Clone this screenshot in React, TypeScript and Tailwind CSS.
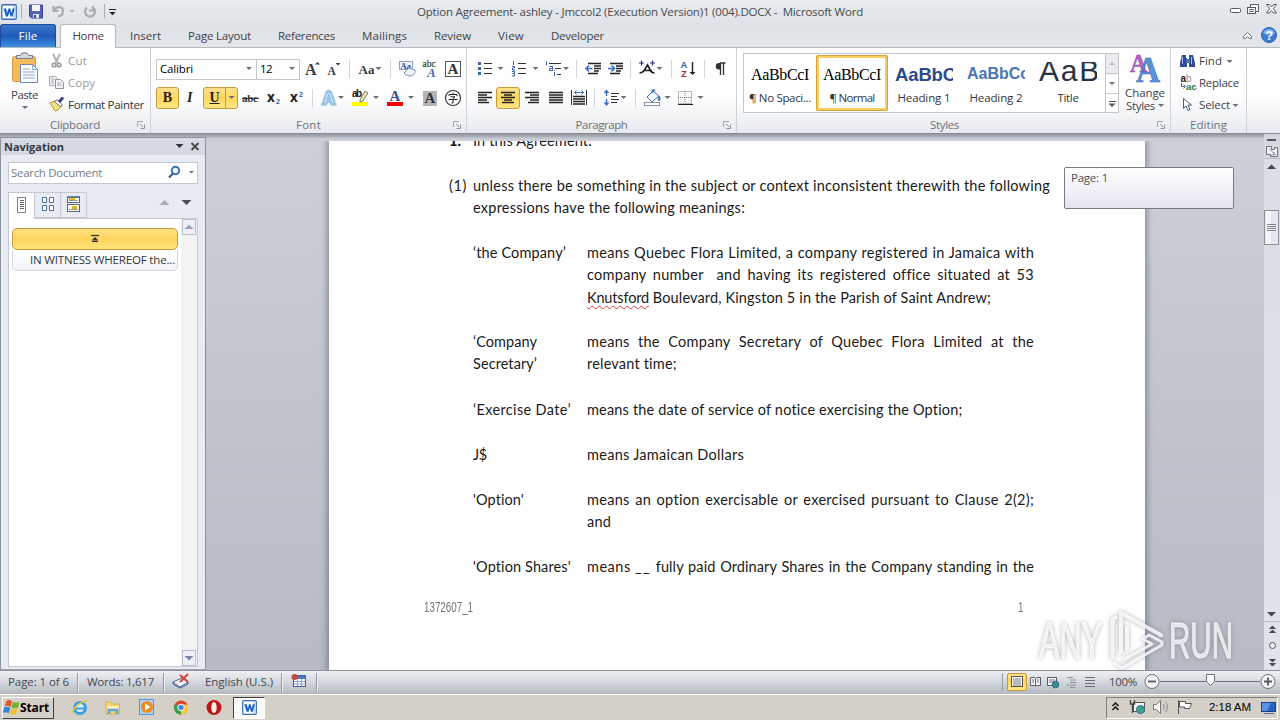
import React, { useLayoutEffect, useRef } from "react";

type FitProps = { w: number; c?: string; word?: boolean; children: string };

/* A single line of text whose tracking (or word gap) is adjusted to a given width. */
function Fit({ w, c = "", word = false, children }: FitProps) {
  const ref = useRef<HTMLSpanElement>(null);
  useLayoutEffect(() => {
    const el = ref.current;
    if (!el) return;
    el.style.letterSpacing = "";
    el.style.wordSpacing = "";
    const natural = el.getBoundingClientRect().width;
    if (word) {
      const gaps = children.split(" ").length - 1;
      el.style.wordSpacing = `${(w - natural) / gaps}px`;
    } else {
      el.style.letterSpacing = `${(w - natural) / children.length}px`;
    }
  }, [w, word, children]);
  return (
    <span ref={ref} className={`inline-block shrink-0 whitespace-pre ${c}`}>
      {children}
    </span>
  );
}

type IcoProps = { x: number; y: number; w: number; h: number; children?: React.ReactNode };

/* Icon canvas: its view box starts at (x, y). */
function Ico({ x, y, w, h, children }: IcoProps) {
  return (
    <svg className="block shrink-0" width={w} height={h} viewBox={`${x} ${y} ${w} ${h}`} fill="none">
      {children}
    </svg>
  );
}

const Down = ({ x, y, s = 3, f = "#6b6f76" }: { x: number; y: number; s?: number; f?: string }) => (
  <path d={`M${x - s} ${y}h${2 * s}l${-s} ${s}z`} fill={f} />
);
const Up = ({ x, y, s = 3, f = "#6b6f76" }: { x: number; y: number; s?: number; f?: string }) => (
  <path d={`M${x - s} ${y + s}h${2 * s}l${-s} ${-s}z`} fill={f} />
);
const VSep = ({ x, y }: { x: number; y: number }) => <path d={`M${x + 0.5} ${y}v18`} stroke="#d3d6db" />;

function Launcher() {
  return (
    <svg className="block h-2 w-2 shrink-0" viewBox="0 0 8 8" fill="none">
      <path d="M.5 6V.5H6" stroke="#a2a6ad" />
      <path d="M3 3l3 3M7.500 3.500v4h-4" stroke="#8f949c" />
    </svg>
  );
}

function WordLogo({ s = 16 }: { s?: number }) {
  return (
    <svg className="block shrink-0" width={s} height={s} viewBox="0 0 16 16" fill="none">
      <rect x=".75" y=".75" width="14.500" height="14.500" rx="1" fill="#f4f9ff" stroke="#3a6fb8" strokeWidth="1.300" />
      <path d="M12 2h2.500v12H12z" fill="#c9dcf3" />
      <path d="M2.500 4.500h2.600l1.100 4.600 1.300-4.600h1.700l1.200 4.600 1.200-4.600h2.200l-2.300 8H9.600L8.300 8.200 7 12.500H4.900z" fill="#1f62c4" />
    </svg>
  );
}

function TitleBar() {
  return (
    <div className="flex h-6 shrink-0 items-center bg-linear-to-b from-[#e9ebee] to-[#dfe3e7]">
      <div className="ml-px"><WordLogo /></div>
      <Ico x={17} y={0} w={105} h={24}>
        <path d="M21.500 4v14M104.500 4v14" stroke="#a9adb3" />
        <path d="M29.500 5h13v13h-11l-2-2z" fill="#5560b8" stroke="#3b4390" />
        <path d="M32 5h8v6h-8z" fill="#f3f6fc" />
        <path d="M33 14h6v4h-6z" fill="#dfe4f2" />
        <path d="M34 15h2v3h-2z" fill="#3b4390" />
        <path d="M53.500 6v5h5M54 10.500c3-5 9-4 9 .5 0 3-2 5-5 5.500" stroke="#a9adb2" strokeWidth="2.200" />
        <Down x={72} y={10} f="#a6aab0" s={2.5} />
        <path d="M93 6v4.500h-4M87 7.500a5 5 0 1 0 7 1" stroke="#a9adb2" strokeWidth="2.200" />
        <path d="M109 9.500h7" stroke="#222" />
        <Down x={112.5} y={12} f="#222" s={3.2} />
      </Ico>
      <Fit w={446} c="ml-[295px] font-['Open_Sans',sans-serif] text-[11.500px] leading-[24px] text-[#45484d]">
        Option Agreement- ashley - Jmccol2 (Execution Version)1 (004).DOCX -  Microsoft Word
      </Fit>
      <div className="flex-1" />
      <Ico x={1226} y={0} w={54} h={24}>
        <rect x="1230.500" y="8.500" width="10" height="4" rx="1" fill="#fff" stroke="#555a62" />
        <path d="M1250.500 7.500v-3h8v7h-3" fill="#fff" stroke="#555a62" />
        <rect x="1247.500" y="7.500" width="8" height="6" fill="#fff" stroke="#555a62" />
        <rect x="1250" y="9.500" width="3" height="2" fill="#fff" stroke="#555a62" />
        <path d="M1266.500 4.500h3l2 2.500 2-2.500h3l-3.300 4.200 3.300 4.300h-3l-2-2.500-2 2.500h-3l3.300-4.300z" fill="#fff" stroke="#555a62" />
      </Ico>
    </div>
  );
}

function Tabs() {
  const t = "font-['Open_Sans',sans-serif] text-[11.500px] leading-[23px] text-[#3f4247]";
  return (
    <div className="flex h-[23px] shrink-0 items-stretch bg-linear-to-b from-[#dfe3e7] to-[#e3e6ea]">
      <div className="flex w-14 justify-center rounded-t-[3px] border border-b-0 border-[#1c4b9c] bg-linear-to-b from-[#3d78cc] via-[#1f5bb9] to-[#3f8fe0]">
        <Fit w={19} c="font-['Open_Sans',sans-serif] text-[11.500px] leading-[22px] text-white">File</Fit>
      </div>
      <div className="z-10 -mb-px ml-1 flex w-14 justify-center rounded-t-[3px] border border-b-0 border-[#b5b9c0] bg-white">
        <Fit w={31} c="font-['Open_Sans',sans-serif] text-[11.500px] leading-[21px] text-[#3f4247]">Home</Fit>
      </div>
      <Fit w={31} c={`ml-[14px] ${t}`}>Insert</Fit>
      <Fit w={63} c={`ml-[27px] ${t}`}>Page Layout</Fit>
      <Fit w={57} c={`ml-[27px] ${t}`}>References</Fit>
      <Fit w={45} c={`ml-[27px] ${t}`}>Mailings</Fit>
      <Fit w={37} c={`ml-[27px] ${t}`}>Review</Fit>
      <Fit w={26} c={`ml-[27px] ${t}`}>View</Fit>
      <Fit w={53} c={`ml-[27px] ${t}`}>Developer</Fit>
      <div className="flex-1" />
      <Ico x={1240} y={24} w={40} h={23}>
        <path d="M1243.500 38.500v-2l4-4 4 4v2h-2l-2-2-2 2z" fill="#fff" stroke="#6b7078" />
        <circle cx="1269" cy="35" r="7.500" fill="#3f7bd0" stroke="#2c5fae" />
        <path d="M1263 33a6.500 6.500 0 0 1 12 0c-3 2-9 2-12 0z" fill="#7fb0ea" />
        <text x="1265.300" y="39.800" fontSize="13" fontWeight="bold" fill="#fff" fontFamily="Liberation Sans">?</text>
      </Ico>
    </div>
  );
}

const label = "font-['Open_Sans',sans-serif] text-[11.500px] leading-[16px] text-[#6d7279]";
const ui = "font-['Open_Sans',sans-serif] text-[11.500px] leading-[16px]";

function Foot({ w, text, launch = true }: { w: number; text: string; launch?: boolean }) {
  return (
    <div className="mt-auto grid h-[17px] grid-cols-[1fr_auto_1fr] items-center">
      <span />
      <Fit w={w} c={label}>{text}</Fit>
      {launch ? <div className="mr-[5px] justify-self-end"><Launcher /></div> : <span />}
    </div>
  );
}

function Clipboard() {
  return (
    <div className="flex w-[151px] flex-col border-r border-[#cfd3d9]">
      <div className="flex">
        <div className="flex w-[49px] flex-col items-center">
          <Ico x={0} y={48} w={49} h={39}>
            <rect x="12.500" y="56.500" width="23" height="25" rx="2" fill="#f3bd5c" stroke="#d79a36" />
            <path d="M16.500 58.500h16v-3h-4l-1.500-2.500h-5l-1.500 2.500h-4z" fill="#d4d8de" stroke="#777d86" />
            <path d="M20.500 64.500h12l5 5v13h-17z" fill="#fbfcff" stroke="#6f87b4" />
            <path d="M32.500 64.500v5h5M23 69h7M23 72h12M23 75h12M23 78h12" stroke="#8fa5cc" />
          </Ico>
          <Fit w={27} c={`${ui} text-[#3f4247]`}>Paste</Fit>
          <Ico x={19} y={103} w={12} h={8}><Down x={25} y={106} /></Ico>
        </div>
        <div className="flex flex-col pt-[2px]">
          <div className="flex h-[22px] items-center">
            <Ico x={49} y={50} w={19} h={22}>
              <path d="M53 54l4.500 9M60 54l-4.500 9" stroke="#b0b3b8" strokeWidth="2" />
              <circle cx="54" cy="65" r="1.800" stroke="#96999e" strokeWidth="1.600" />
              <circle cx="59" cy="65" r="1.800" stroke="#96999e" strokeWidth="1.600" />
            </Ico>
            <Fit w={19} c={`${ui} text-[#999da3]`}>Cut</Fit>
          </div>
          <div className="flex h-[22px] items-center">
            <Ico x={49} y={72} w={19} h={22}>
              <path d="M49.500 76.500h6l2 2v7h-8z" fill="#f2f3f5" stroke="#a5a9ae" />
              <path d="M55.500 79.500h5l3 3v6h-8z" fill="#f2f3f5" stroke="#93979d" />
              <path d="M51 79h4M51 81h3M51 83h3M57 83h4M57 85h5" stroke="#aaaeb3" />
            </Ico>
            <Fit w={27} c={`${ui} text-[#999da3]`}>Copy</Fit>
          </div>
          <div className="flex h-[22px] items-center">
            <Ico x={49} y={94} w={19} h={22}>
              <path d="M50 103l7-3 5 5-4 5-3 1z" fill="#f7df7f" stroke="#b89b3a" />
              <path d="M54.500 101.500l3-1.500 4.500 4.500-1 2.500z" fill="#fff" stroke="#777" />
              <path d="M59 102l4-4.500" stroke="#3b3f86" strokeWidth="3" />
            </Ico>
            <Fit w={76} c={`${ui} text-[#33363b]`}>Format Painter</Fit>
          </div>
        </div>
      </div>
      <Foot w={50} text="Clipboard" />
    </div>
  );
}

const serif = "Liberation Serif";
const sans = "Liberation Sans";
const hot = "border border-[#c8983c] bg-linear-to-b from-[#fde08c] via-[#ffd65c] to-[#ffe887]";

function FontGroup() {
  return (
    <div className="flex w-[316px] flex-col border-r border-[#cfd3d9]">
      <div className="mt-[10px] flex h-[22px] items-center pl-[5px]">
        <div className="flex h-[21px] w-[101px] items-center justify-between border border-[#c4c7cc] bg-white pl-[3px] pr-[3px]">
          <Fit w={33} c={`${ui} text-black`}>Calibri</Fit>
          <Ico x={0} y={0} w={8} h={6}><Down x={4} y={1} /></Ico>
        </div>
        <div className="flex h-[21px] w-[43px] items-center justify-between border border-l-0 border-[#c4c7cc] bg-white pl-[3px] pr-[3px]">
          <Fit w={12} c={`${ui} text-black`}>12</Fit>
          <Ico x={0} y={0} w={8} h={6}><Down x={4} y={1} /></Ico>
        </div>
        <Ico x={300} y={58} w={24} h={22}>
          <text x="305" y="75" fontSize="16" fontWeight="bold" fill="#3a3a3a" fontFamily={serif}>A</text>
          <Up x={317.500} y={62} s={2.5} f="#33415f" />
        </Ico>
        <Ico x={324} y={58} w={32} h={22}>
          <text x="327.500" y="75" fontSize="11.500" fontWeight="bold" fill="#3a3a3a" fontFamily={serif}>A</text>
          <Down x={338} y={63} s={2.5} f="#33415f" />
          <VSep x={349} y={60} />
        </Ico>
        <Ico x={356} y={58} w={38} h={22}>
          <text x="358.500" y="74" fontSize="13" fontWeight="bold" fill="#3a3a3a" fontFamily={serif}>Aa</text>
          <Down x={378.500} y={67} />
          <VSep x={390} y={60} />
        </Ico>
        <Ico x={394} y={58} w={25} h={22}>
          <rect x="399.500" y="61.500" width="13" height="8" fill="#eef3fb" stroke="#8da0bf" />
          <text x="400.500" y="69" fontSize="8.500" fontWeight="bold" fill="#2b4a8c" fontFamily={serif}>Aa</text>
          <path d="M404 73l5-5 6 2c1 2-1 5-4 6-3 0-5-1-7-3z" fill="#f2f5fc" stroke="#7c8fb8" />
        </Ico>
        <Ico x={419} y={58} w={24} h={22}>
          <text x="422.500" y="67" fontSize="9.500" fill="#2d4a33" fontFamily={serif} stroke="#2d4a33" strokeWidth=".2">abc</text>
          <text x="427" y="77" fontSize="13" fontStyle="italic" fontWeight="bold" fill="#3f66b5" fontFamily={serif}>A</text>
        </Ico>
        <Ico x={443} y={58} w={20} h={22}>
          <rect x="445.500" y="61.500" width="15" height="15" fill="#fff" stroke="#555" />
          <text x="447.500" y="74" fontSize="15" fontWeight="bold" fill="#333" fontFamily={serif}>A</text>
        </Ico>
      </div>
      <div className="mt-[7px] flex h-[22px] items-center pl-[5px]">
        <div className={`flex h-[22px] w-[23px] items-center justify-center rounded-[3px] font-['Liberation_Serif',serif] text-[14px] font-bold leading-none text-[#222] ${hot}`}>B</div>
        <Ico x={179} y={87} w={24} h={22}>
          <text x="187" y="102" fontSize="14" fontStyle="italic" fill="#222" fontWeight="bold" fontFamily={serif}>I</text>
        </Ico>
        <div className={`flex h-[22px] w-[35px] items-center rounded-[3px] ${hot}`}>
          <div className="flex h-full w-[22px] items-center justify-center border-r border-[#c8983c] font-['Liberation_Serif',serif] text-[14px] font-bold leading-none text-[#222] underline">U</div>
          <Ico x={0} y={0} w={11} h={6}><Down x={5.500} y={1} /></Ico>
        </div>
        <Ico x={238} y={87} w={24} h={22}>
          <text x="242" y="102" fontSize="11" fill="#3a3a3a" fontWeight="bold" fontFamily={serif} textLength="16">abc</text>
          <path d="M242 98.500h17" stroke="#333" />
        </Ico>
        <Ico x={262} y={87} w={23} h={22}>
          <text x="267" y="102" fontSize="13.500" fill="#222" fontWeight="bold" fontFamily="Open Sans">x</text>
          <text x="276" y="104" fontSize="7" fill="#2f63b5" fontWeight="bold" fontFamily={sans}>2</text>
        </Ico>
        <Ico x={285} y={87} w={31} h={22}>
          <text x="290" y="102" fontSize="13.500" fill="#222" fontWeight="bold" fontFamily="Open Sans">x</text>
          <text x="299" y="97" fontSize="7" fill="#2f63b5" fontWeight="bold" fontFamily={sans}>2</text>
          <VSep x={312} y={89} />
        </Ico>
        <Ico x={316} y={87} w={33} h={22}>
          <text x="322.500" y="104" fontSize="17" fill="#fff" stroke="#a6cdf0" strokeWidth="3.500" fontWeight="bold" fontFamily={sans}>A</text>
          <text x="322.500" y="104" fontSize="17" fill="#eef6fd" stroke="#7fb4e2" strokeWidth="1" fontWeight="bold" fontFamily={sans}>A</text>
          <Down x={341} y={96} />
        </Ico>
        <Ico x={349} y={87} w={35} h={22}>
          <rect x="352" y="102" width="16" height="4" fill="#ffff00" />
          <text x="352" y="97" fontSize="10" fill="#222" fontWeight="bold" fontFamily={sans} textLength="10">ab</text>
          <path d="M360 100l5-9 3 2-5 8-3 1z" fill="#e3e6b0" stroke="#5f6448" strokeWidth=".8" />
          <Down x={376} y={96} />
        </Ico>
        <Ico x={384} y={87} w={35} h={22}>
          <rect x="387" y="102" width="16" height="4" fill="#f40000" />
          <text x="389.500" y="101" fontSize="15" fill="#34518f" fontWeight="bold" fontFamily={serif}>A</text>
          <Down x={411} y={96} />
        </Ico>
        <Ico x={419} y={87} w={24} h={22}>
          <rect x="423" y="91" width="14" height="15" fill="#b5b5b5" />
          <text x="424.500" y="103" fontSize="15" fill="#333" fontWeight="bold" fontFamily={serif}>A</text>
        </Ico>
        <Ico x={443} y={87} w={20} h={22}>
          <circle cx="453" cy="98" r="7.500" fill="#fff" stroke="#333" strokeWidth="1.200" />
          <path d="M453 92.500v1.500M449 96v-1.500h8V96M450.500 96.800h4.500l-2 1.700v4.500h-1.500M448.500 99.500h9" stroke="#222" />
        </Ico>
      </div>
      <Foot w={25} text="Font" />
    </div>
  );
}

function Lines({ d }: { d: string }) {
  return <path d={d} stroke="#222" strokeWidth="1.300" />;
}

function ParagraphGroup() {
  return (
    <div className="flex w-[270px] flex-col border-r border-[#cfd3d9]">
      <div className="mt-[10px] flex h-[22px] pl-[5px]">
        <Ico x={472} y={58} w={35} h={22}>
          <path d="M478 62h3v3h-3zM478 67h3v3h-3zM478 72h3v3h-3z" fill="#3d63a8" />
          <path d="M484 63.500h8M484 68.500h8M484 73.500h8" stroke="#333" />
          <Down x={500.500} y={67} />
        </Ico>
        <Ico x={507} y={58} w={35} h={22}>
          <path d="M513.500 61v4M512 66.500h2.500v1.500h-2v2h2.500M512 71.500h2.500v4.500H512M512.500 73.500h2" stroke="#3d63a8" />
          <path d="M518 63.500h8M518 68.500h8M518 73.500h8" stroke="#333" />
          <Down x={535.500} y={67} />
        </Ico>
        <Ico x={542} y={58} w={40} h={22}>
          <path d="M546.500 61.500v4M549.500 66.500h3v4h-3v-2h3M554.500 72v4M554.500 70v1" stroke="#3d63a8" />
          <path d="M549 63.500h12M555 68.500h6M557 74.500h4" stroke="#333" />
          <Down x={566} y={67} />
          <VSep x={576} y={60} />
        </Ico>
        <Ico x={582} y={58} w={23} h={22}>
          <Lines d="M588 63.500h13M594 66h7M594 68.500h7M594 71h5M588 73.500h10" />
          <path d="M592.500 68.500h-6M589 65.500l-3 3 3 3" stroke="#3a6cc0" strokeWidth="1.600" />
        </Ico>
        <Ico x={605} y={58} w={30} h={22}>
          <Lines d="M610 63.500h13M616 66h7M616 68.500h7M616 71h5M610 73.500h10" />
          <path d="M608 68.500h6M611.500 65.500l3 3-3 3" stroke="#3a6cc0" strokeWidth="1.600" />
          <VSep x={630} y={60} />
        </Ico>
        <Ico x={635} y={58} w={40} h={22}>
          <path d="M639.500 73c4 0 5-3 8-8 3 5 3 8 7 8M643 70.500h9" stroke="#222" strokeWidth="1.700" />
          <path d="M639 63h5M641.500 60.500v5M650 63h5M652.500 60.500v5" stroke="#2c2f84" strokeWidth="1.200" />
          <Down x={659.500} y={67} />
          <VSep x={671} y={60} />
        </Ico>
        <Ico x={675} y={58} w={35} h={22}>
          <text x="680.500" y="67.500" fontSize="9.500" fontWeight="bold" fill="#3d63b0" fontFamily={sans}>A</text>
          <text x="681" y="76.500" fontSize="9.500" fontWeight="bold" fill="#a03a3a" fontFamily={sans}>Z</text>
          <path d="M692.500 62v11" stroke="#222" strokeWidth="1.400" />
          <Down x={692.500} y={72} f="#222" />
          <VSep x={704} y={60} />
        </Ico>
        <Ico x={710} y={58} w={22} h={22}>
          <path d="M720.500 75V63h5M723.500 63v12" stroke="#333" strokeWidth="1.300" />
          <path d="M721 63h-2a3 3 0 0 0 0 6.500h2z" fill="#333" />
        </Ico>
      </div>
      <div className="mt-[7px] flex h-[22px] pl-[5px]">
        <Ico x={472} y={87} w={24} h={22}><Lines d="M478 92.500h14M478 95h9M478 97.500h14M478 100h9M478 102.500h11" /></Ico>
        <div className={`flex h-[22px] w-6 items-center justify-center rounded-[3px] ${hot}`}>
          <Ico x={497} y={88} w={22} h={20}><Lines d="M501 92.500h14M504 95h8M501 97.500h14M504 100h8M502 102.500h12" /></Ico>
        </div>
        <Ico x={520} y={87} w={24} h={22}><Lines d="M525 92.500h14M530 95h9M525 97.500h14M530 100h9M528 102.500h11" /></Ico>
        <Ico x={544} y={87} w={23} h={22}><Lines d="M549 92.500h14M549 95h14M549 97.500h14M549 100h14M549 102.500h14" /></Ico>
        <Ico x={567} y={87} w={33} h={22}>
          <path d="M571.500 90v15M586.500 90v15" stroke="#333" />
          <path d="M574 92.500h10M576.500 90.500l-2 2 2 2M581.500 90.500l2 2-2 2" stroke="#3a6cc0" />
          <Lines d="M573 96.500h12M573 99h12M573 101.500h12M573 104h12" />
          <VSep x={594} y={89} />
        </Ico>
        <Ico x={600} y={87} w={40} h={22}>
          <path d="M606.500 91v5M604.500 93l2-2.500 2 2.500M606.500 99v6M604.500 102.500l2 2.500 2-2.500" stroke="#3a6cc0" strokeWidth="1.400" />
          <path d="M611 93.500h8M611 96.500h6M611 99.500h8M611 102.500h6" stroke="#333" />
          <Down x={623.500} y={96} />
          <VSep x={635} y={89} />
        </Ico>
        <Ico x={640} y={87} w={33} h={22}>
          <path d="M647 97l6-6 6 5-7 6z" fill="#f2f6fc" stroke="#4a6ea8" />
          <path d="M652 93v-2c0-2 3-2 3 0M659 96c1.500 2 1.500 3 0 5-1-2-1-3 0-5z" fill="#4a7ac0" stroke="#4a6ea8" />
          <rect x="644.500" y="102.500" width="15" height="3" fill="#fff" stroke="#8793a8" />
          <Down x={667.500} y={96} />
        </Ico>
        <Ico x={673} y={87} w={40} h={22}>
          <path d="M678.500 91.500h13v12h-13zM685 91v12M678 97.500h14" stroke="#777" strokeDasharray="1 1" />
          <path d="M678 104.500h15" stroke="#222" />
          <Down x={700.500} y={96} />
        </Ico>
      </div>
      <Foot w={52} text="Paragraph" />
    </div>
  );
}

function StyleCell({ w, name, hotCell = false, children }: { w: number; name: string; hotCell?: boolean; children: React.ReactNode }) {
  return (
    <div className={`flex h-[56px] w-[72px] shrink-0 flex-col items-center ${hotCell ? "rounded-[2px] border-[3px] border-[#f6cf62] outline outline-1 -outline-offset-1 outline-[#d3a03a]" : "border-[3px] border-transparent"}`}>
      <div className="mt-[4px] flex h-[28px] w-[58px] items-start overflow-hidden">{children}</div>
      <Fit w={w} c={`${ui} text-[#33363b]`}>{name}</Fit>
    </div>
  );
}

function StylesGroup() {
  return (
    <div className="flex w-[434px] flex-col border-r border-[#cfd3d9]">
      <div className="flex pl-[6px] pt-[5px]">
        <div className="flex h-[60px] w-[376px] items-center border border-[#c4c8ce] bg-white">
          <StyleCell w={62} name="¶ No Spaci...">
            <Fit w={58} c="mt-[3px] font-['Liberation_Serif',serif] text-[16px] leading-[20px] text-black">AaBbCcI</Fit>
          </StyleCell>
          <StyleCell w={45} name="¶ Normal" hotCell>
            <Fit w={58} c="mt-[3px] font-['Liberation_Serif',serif] text-[16px] leading-[20px] text-black">AaBbCcI</Fit>
          </StyleCell>
          <StyleCell w={53} name="Heading 1">
            <Fit w={61} c="mt-[3px] font-['Liberation_Sans',sans-serif] text-[18.500px] font-bold leading-[20px] text-[#2b4a87]">AaBbC</Fit>
          </StyleCell>
          <StyleCell w={53} name="Heading 2">
            <Fit w={62} c="mt-[2px] font-['Liberation_Sans',sans-serif] text-[16px] font-bold leading-[20px] text-[#4a76b8]">AaBbCc</Fit>
          </StyleCell>
          <StyleCell w={21} name="Title">
            <Fit w={62} c="-mt-[5px] font-['Liberation_Sans',sans-serif] text-[30px] leading-[28px] text-[#27333f]">AaB</Fit>
          </StyleCell>
          <div className="ml-auto">
            <Ico x={1105} y={54} w={13} h={58}>
              <path d="M1105.500 54v58" stroke="#c4c8ce" />
              <path d="M1106 54h13v19h-13z" fill="#e9ebee" />
              <path d="M1105 73.500h14M1105 93.500h14" stroke="#c4c8ce" />
              <Up x={1112} y={62} f="#b5b9bf" />
              <Down x={1112} y={82} />
              <path d="M1109 101.500h7" stroke="#555" />
              <Down x={1112} y={103.500} f="#555" s={3.5} />
            </Ico>
          </div>
        </div>
        <div className="ml-[5px] flex w-[42px] flex-col items-center">
          <Ico x={1129} y={53} w={32} h={33}>
            <text x="1130" y="72" fontSize="25" fontWeight="bold" fill="#b565c6" stroke="#8d459f" strokeWidth=".5" fontFamily={serif} textLength="17" lengthAdjust="spacingAndGlyphs">A</text>
            <text x="1136" y="82" fontSize="35" fontWeight="bold" fill="#5d92d8" stroke="#3a68b5" strokeWidth=".6" fontFamily={serif} textLength="24" lengthAdjust="spacingAndGlyphs">A</text>
          </Ico>
          <Fit w={40} c="font-['Open_Sans',sans-serif] text-[11.500px] leading-[13px] text-[#3f4247]">Change</Fit>
          <div className="flex items-center gap-[3px]">
            <Fit w={29} c="font-['Open_Sans',sans-serif] text-[11.500px] leading-[13px] text-[#3f4247]">Styles</Fit>
            <Ico x={0} y={0} w={6} h={5}><Down x={3} y={1} /></Ico>
          </div>
        </div>
      </div>
      <div className="mt-auto flex h-[17px] items-center pl-[193px]">
        <Fit w={29} c={label}>Styles</Fit>
        <div className="ml-auto mr-[5px]"><Launcher /></div>
      </div>
    </div>
  );
}

function EditingGroup() {
  return (
    <div className="flex w-[76px] flex-col border-r border-[#cfd3d9]">
      <div className="flex flex-col pl-[6px] pt-[2px]">
        <div className="flex h-[22px] items-center">
          <Ico x={1177} y={50} w={22} h={22}>
            <path d="M1182 55h4v3h1v9h-7v-4zM1189 55h4l2 8v4h-6v-9z" fill="#2f4d94" />
            <path d="M1186 59h4v4h-4z" fill="#5571ac" />
            <path d="M1182.500 57v7M1191.500 57v7" stroke="#a9bde4" />
          </Ico>
          <Fit w={23} c={`${ui} text-[#3f4247]`}>Find</Fit>
          <Ico x={1222} y={50} w={14} h={22}><Down x={1229.500} y={60} /></Ico>
        </div>
        <div className="flex h-[22px] items-center">
          <Ico x={1177} y={72} w={22} h={22}>
            <text x="1180.500" y="82" fontSize="10" fontWeight="bold" fill="#222" fontFamily={sans}>a</text>
            <text x="1186" y="82" fontSize="10" fill="#8c9099" fontFamily={sans}>b</text>
            <path d="M1181.500 83v3.500h3M1183.500 84.500l2 2-2 2" stroke="#3a5fb0" />
            <text x="1186" y="89.500" fontSize="9.500" fontWeight="bold" fill="#2f7a42" fontFamily={sans}>ac</text>
          </Ico>
          <Fit w={40} c={`${ui} text-[#3f4247]`}>Replace</Fit>
        </div>
        <div className="flex h-[22px] items-center">
          <Ico x={1177} y={94} w={22} h={22}>
            <path d="M1183.500 98.500v10l2.500-2.500 2 4.500 2-1-2-4.500h3.500z" fill="#fff" stroke="#4a5b80" />
          </Ico>
          <Fit w={31} c={`${ui} text-[#3f4247]`}>Select</Fit>
          <Ico x={1230} y={94} w={14} h={22}><Down x={1235.500} y={104} /></Ico>
        </div>
      </div>
      <Foot w={37} text="Editing" launch={false} />
    </div>
  );
}

function Navigation() {
  return (
    <div className="flex w-[206px] shrink-0 flex-col border border-[#8d939e] border-b-[#9da2ac] bg-[#e8ebf2] pb-[2px]">
      <div className="flex h-[17px] items-center bg-[#d6dae5] pl-[3px]">
        <Fit w={60} c="font-['Open_Sans',sans-serif] text-[11px] font-bold leading-[17px] text-[#33363d]">Navigation</Fit>
        <div className="flex-1" />
        <Ico x={172} y={139} w={33} h={17}>
          <Down x={179.500} y={145} s={4} f="#333" />
          <path d="M191.500 144l7 7M198.500 144l-7 7" stroke="#444" strokeWidth="1.800" />
        </Ico>
      </div>
      <div className="mx-[7px] mt-[7px] flex h-[22px] items-center border border-[#c3c8d2] bg-white pl-[2px]">
        <Fit w={91} c={`${ui} text-[#777b82]`}>Search Document</Fit>
        <div className="flex-1" />
        <Ico x={164} y={163} w={33} h={20}>
          <circle cx="175.500" cy="170.500" r="3.700" fill="#eef5ff" stroke="#3b6fb5" strokeWidth="2" />
          <path d="M173 173.500l-4 4" stroke="#2c57a0" strokeWidth="2.200" />
          <Down x={191.500} y={171} s={2.5} />
        </Ico>
      </div>
      <div className="mx-[7px] mt-2 flex h-[26px]">
        <div className="z-10 -mb-px flex w-[27px] items-center justify-center border border-b-0 border-[#c3c8d2] bg-white">
          <Ico x={14} y={195} w={16} h={20}>
            <rect x="17.500" y="196.500" width="8" height="15" fill="#fff" stroke="#7a808c" />
            <path d="M20 199.500h4M20 201.500h4M20 203.500h4M20 205.500h4M20 207.500h4" stroke="#666" />
          </Ico>
        </div>
        <div className="flex w-[26px] items-center justify-center border border-l-0 border-[#c3c8d2]">
          <Ico x={39} y={195} w={16} h={20}>
            <path d="M41.500 197.500h4v5h-4zM48.500 197.500h4v5h-4zM41.500 205.500h4v5h-4zM48.500 205.500h4v5h-4z" fill="#fff" stroke="#4f6f9f" />
          </Ico>
        </div>
        <div className="flex w-[26px] items-center justify-center border border-l-0 border-[#c3c8d2]">
          <Ico x={66} y={195} w={16} h={20}>
            <rect x="67.500" y="197.500" width="12" height="5" fill="#fff" stroke="#5c6578" />
            <rect x="67.500" y="204.500" width="12" height="7" fill="#fff" stroke="#5c6578" />
            <path d="M69 197h6v3h-6zM72 206h5v3h-5z" fill="#e0b81c" />
            <path d="M67 197h13" stroke="#3a6a9c" strokeWidth="1.500" />
            <path d="M69 200.500h9M69 209.500h9" stroke="#999" />
          </Ico>
        </div>
        <div className="flex-1" />
        <Ico x={156} y={192} w={42} h={24}>
          <Up x={164.500} y={200} s={5} f="#a9adb6" />
          <Down x={186.500} y={200} s={5} f="#4a4e56" />
        </Ico>
      </div>
      <div className="mx-[7px] flex flex-1 border border-[#c3c8d2] bg-white">
        <div className="flex flex-1 flex-col pl-[3px] pr-[3px] pt-[9px]">
          <div className="flex h-[22px] items-center justify-center rounded-[5px] border border-[#c8983c] bg-linear-to-b from-[#ffe27f] via-[#ffd45f] to-[#ffe578]">
            <Ico x={90} y={234} w={10} h={10}>
              <path d="M91 235.500h8" stroke="#333" strokeWidth="1.300" />
              <Up x={95} y={237} s={3.500} f="#333" />
              <path d="M92 241.500h6" stroke="#333" />
            </Ico>
          </div>
          <div className="flex h-[21px] items-center rounded-b-[5px] border border-t-0 border-[#d5d7dc] bg-linear-to-b from-white to-[#f3f4f6] pl-[17px]">
            <Fit w={145} c={`${ui} text-[#33363b]`}>IN WITNESS WHEREOF the...</Fit>
          </div>
        </div>
        <div className="flex w-4 flex-col justify-between bg-[#f3f3f6] pl-px">
          <div className="flex h-4 w-[14px] items-center justify-center border border-[#b9bfcb] bg-[#eef0f5]">
            <Ico x={0} y={0} w={10} h={6}><Up x={5} y={0.5} s={4.500} f="#9aa3b8" /></Ico>
          </div>
          <div className="flex h-4 w-[14px] items-center justify-center border border-[#b9bfcb] bg-[#eef0f5]">
            <Ico x={0} y={0} w={10} h={6}><Down x={5} y={1} s={4.500} f="#7d88a6" /></Ico>
          </div>
        </div>
      </div>
    </div>
  );
}

const doc = "font-[Lato,sans-serif] text-[14.500px] leading-[22px] text-[#1a1a1a]";

function Definition({ terms, w, children }: { terms: string[]; w: number[]; children: React.ReactNode }) {
  return (
    <div className="mt-[23px] flex">
      <div className="flex w-[114px] flex-col items-start">
        {terms.map((t, i) => <Fit key={t} w={w[i]} c={doc}>{t}</Fit>)}
      </div>
      <div className="flex flex-col items-start">{children}</div>
    </div>
  );
}

function Page() {
  const foot = "inline-block origin-left scale-x-[0.7] whitespace-pre font-['Liberation_Sans',sans-serif] text-[14px] leading-[22px] text-[#757575]";
  return (
    <div className="mt-[7px] flex w-[816px] shrink-0 flex-col items-start overflow-hidden bg-white pl-[120px] shadow-[0_0_6px_2px_rgba(90,95,105,0.6)] [clip-path:inset(0_-12px)]">
      <div className="-mt-[11px] flex">
        <Fit w={12} c="mr-[12px] font-[Lato,sans-serif] text-[14.500px] font-black leading-[22px] text-[#111]">1.</Fit>
        <Fit w={119} c={doc}>In this Agreement:</Fit>
      </div>
      <div className="mt-[23px] flex">
        <Fit w={18} c={`mr-[6px] ${doc}`}>(1)</Fit>
        <div className="flex flex-col items-start">
          <Fit w={577} c={doc}>unless there be something in the subject or context inconsistent therewith the following</Fit>
          <Fit w={272} c={doc}>expressions have the following meanings:</Fit>
        </div>
      </div>
      <div className="flex flex-col pl-[24px]">
        <Definition terms={["‘the Company’"]} w={[93]}>
          <Fit w={447} word c={`tracking-[0.28px] ${doc}`}>means Quebec Flora Limited, a company registered in Jamaica with</Fit>
          <Fit w={447} word c={`tracking-[0.28px] ${doc}`}>company number  and having its registered office situated at 53</Fit>
          <div className="mt-px flex">
            <Fit w={62} c={`underline decoration-[#e03a3a] decoration-wavy decoration-1 underline-offset-[2px] ${doc}`}>Knutsford</Fit>
            <Fit w={342} c={doc}> Boulevard, Kingston 5 in the Parish of Saint Andrew;</Fit>
          </div>
        </Definition>
        <div className="-mt-px">
          <Definition terms={["‘Company", "Secretary’"]} w={[64, 64]}>
            <Fit w={447} word c={`tracking-[0.28px] ${doc}`}>means the Company Secretary of Quebec Flora Limited at the</Fit>
            <Fit w={90} c={doc}>relevant time;</Fit>
          </Definition>
        </div>
        <div className="mt-px">
          <Definition terms={["‘Exercise Date’"]} w={[98]}>
            <Fit w={376} c={doc}>means the date of service of notice exercising the Option;</Fit>
          </Definition>
        </div>
        <Definition terms={["J$"]} w={[14]}>
          <Fit w={157} c={doc}>means Jamaican Dollars</Fit>
        </Definition>
        <Definition terms={["'Option'"]} w={[51]}>
          <Fit w={447} word c={`tracking-[0.28px] ${doc}`}>means an option exercisable or exercised pursuant to Clause 2(2);</Fit>
          <Fit w={24} c={doc}>and</Fit>
        </Definition>
        <Definition terms={["'Option Shares'"]} w={[98]}>
          <div className="flex">
            <Fit w={48} c={doc}>means </Fit>
            <Fit w={16} c={doc}>__</Fit>
            <Fit w={383} word c={`tracking-[0.1px] ${doc}`}> fully paid Ordinary Shares in the Company standing in the</Fit>
          </div>
        </Definition>
      </div>
      <div className="-ml-[25px] mt-[18px] flex w-[602px] justify-between">
        <span className={foot}>1372607_1</span>
        <span className={foot}>1</span>
      </div>
    </div>
  );
}

function ScrollBar() {
  return (
    <div className="flex w-4 shrink-0 flex-col justify-between bg-linear-to-b from-[#d9dde4] to-[#dfe3ea]">
      <Ico x={1264} y={134} w={16} h={112}>
        <path d="M1264 134h16v25h-16z" fill="#d4d8df" />
        <path d="M1267 140h9" stroke="#555a63" strokeWidth="2" />
        <path d="M1266.500 146.500h5v3h3v-2h3v9h-7v-2h-4z" fill="#f4f5f7" stroke="#6b7078" />
        <path d="M1269 149l7 6M1274 152v3h-3" stroke="#8b9098" />
        <path d="M1264 158.500h16" stroke="#b9bdc6" />
        <Up x={1271.500} y={164.500} s={4.500} f="#444850" />
        <rect x="1264.500" y="210.500" width="14" height="34" fill="#e4e7ee" stroke="#8a909c" />
        <path d="M1266 211h5v33h-5z" fill="#f4f5f9" />
        <path d="M1267 224.500h9M1267 226.500h9M1267 228.500h9M1267 230.500h9" stroke="#7e8490" />
      </Ico>
      <Ico x={1264} y={606} w={16} h={64}>
        <Down x={1271.500} y={612} s={4.500} f="#444850" />
        <path d="M1264 621.500h16" stroke="#b9bdc6" />
        <path d="M1269.500 629l3-3 3 3M1269.500 633l3-3 3 3" fill="#444" stroke="#444" />
        <circle cx="1272.500" cy="645.500" r="3" fill="#f1f3f6" stroke="#555" />
        <path d="M1269.500 659l3 3 3-3M1269.500 663l3 3 3-3" fill="#444" stroke="#444" />
      </Ico>
    </div>
  );
}

function Watermark() {
  return (
    <div className="absolute left-[1034px] top-[606px] drop-shadow-[0_0_2px_rgba(90,95,105,0.6)]">
      <Ico x={1034} y={606} w={204} h={66}>
        <g fill="#fff" fillOpacity=".75" stroke="#fff" strokeOpacity=".75" strokeWidth="1" fontFamily="Liberation Sans" fontSize="49.500">
          <text x="1039" y="658" textLength="63" lengthAdjust="spacingAndGlyphs">ANY</text>
          <text x="1169" y="658" textLength="64" lengthAdjust="spacingAndGlyphs">RUN</text>
        </g>
        <g stroke="#fff" strokeOpacity=".8" strokeWidth="4" strokeLinejoin="round">
          <path d="M1112.500 659v-40l5-2" />
          <path d="M1121 654v-41l40 22v2M1127 626v24" />
          <path d="M1114 663l8 5 40-23v-3l-13-7-6 4 9 5-29 16" strokeWidth="3" />
        </g>
      </Ico>
    </div>
  );
}

function StatusBar() {
  const s = "font-['Open_Sans',sans-serif] text-[11.500px] leading-[20px] pb-[2px] text-[#43474e]";
  return (
    <div className="flex h-6 shrink-0 items-center border-t border-[#8d929b] bg-linear-to-b from-[#eef0f3] via-[#d3d7dd] to-[#b3b7bf]">
      <Fit w={61} c={`ml-[8px] ${s}`}>Page: 1 of 6</Fit>
      <Ico x={69} y={671} w={18} h={23}><path d="M77.500 673v18" stroke="#9499a3" /><path d="M78.500 673v18" stroke="#eef0f3" /></Ico>
      <Fit w={67} c={s}>Words: 1,617</Fit>
      <Ico x={154} y={671} w={51} h={23}>
        <path d="M163.500 673v18" stroke="#9499a3" /><path d="M164.500 673v18" stroke="#eef0f3" />
        <path d="M173 682l7 5 8-5-6-4z" fill="#f5f8ff" stroke="#4a6ba5" />
        <path d="M173 682v2l7 4 8-4v-2" stroke="#39588f" />
        <path d="M180 675l8 7M188 674l-8 8" stroke="#d8463c" strokeWidth="2.200" />
      </Ico>
      <Fit w={68} c={s}>English (U.S.)</Fit>
      <Ico x={273} y={671} w={60} h={23}>
        <path d="M281.500 673v18M316.500 673v18" stroke="#9499a3" /><path d="M282.500 673v18M317.500 673v18" stroke="#eef0f3" />
        <rect x="293.500" y="675.500" width="12" height="11" fill="#fff" stroke="#3f5f9f" />
        <path d="M293 676h13v3h-13z" fill="#4d73bd" />
        <path d="M297.500 679v7M301.500 679v7M294 681.500h11M294 684h11" stroke="#8fa5cf" />
        <circle cx="294.500" cy="677" r="3" fill="#c8473e" />
      </Ico>
      <div className="flex-1" />
      <Ico x={998} y={671} w={9} h={23}><path d="M1002.500 673v18" stroke="#8fa3b0" /></Ico>
      <div className={`mb-[2px] flex h-[18px] w-5 items-center justify-center rounded-[2px] ${hot}`}>
        <Ico x={1010} y={674} w={14} h={14}>
          <rect x="1011.500" y="675.500" width="11" height="10" fill="#fff" stroke="#555" />
          <path d="M1013 678h8M1013 680h8M1013 682h8M1013 684h8" stroke="#777" />
        </Ico>
      </div>
      <Ico x={1027} y={670} w={82} h={23}>
        <path d="M1030.500 676.500h4l1 1 1-1h4v8h-4l-1 1-1-1h-4zM1035.500 677v8" fill="#f3f5f8" stroke="#5a5f69" />
        <path d="M1032 679h2M1032 681h2M1037 679h2M1037 681h2" stroke="#777" />
        <rect x="1047.500" y="676.500" width="9" height="8" fill="#f3f5f8" stroke="#5a5f69" />
        <path d="M1049 679h6M1049 681h4" stroke="#777" />
        <circle cx="1055.500" cy="683.500" r="3.300" fill="#3c8f8c" stroke="#34668e" />
        <path d="M1067 676.500h6M1070 679h6M1070 681.500h6M1067 684h2M1070 684h6M1070 686.500h5" stroke="#8b9099" />
        <path d="M1085 676.500h10M1085 679.500h10M1085 682.500h10M1085 685.500h10" stroke="#666b74" />
      </Ico>
      <Fit w={28} c={s}>100%</Fit>
      <Ico x={1137} y={671} w={143} h={23}>
        <path d="M1160 681.500h100" stroke="#6c717b" />
        <path d="M1210.500 678v7" stroke="#6c717b" />
        <circle cx="1152" cy="681.500" r="7" fill="#f3f4f6" stroke="#6c717b" />
        <path d="M1148 681.500h8" stroke="#555a63" strokeWidth="1.800" />
        <circle cx="1268" cy="681.500" r="7" fill="#f3f4f6" stroke="#6c717b" />
        <path d="M1264 681.500h8M1268 677.500v8" stroke="#555a63" strokeWidth="1.800" />
        <path d="M1206.500 674.500h8v7l-4 4-4-4z" fill="#fafbfc" stroke="#6c717b" />
      </Ico>
    </div>
  );
}

function TaskBar() {
  return (
    <div className="flex h-[26px] shrink-0 items-center border-t border-white bg-[#d4d0c8]">
      <div className="ml-[2px] flex h-[22px] w-[52px] items-center border border-b-[#404040] border-l-white border-r-[#404040] border-t-white bg-[#d4d0c8]">
        <Ico x={3} y={697} w={17} h={20}>
          <path d="M6.500 700c2-1.500 4-1 5.500.5l-1.500 5.500c-2-1.500-4-1.500-6-.5z" fill="#e8542c" />
          <path d="M13 701c2 1 4 1 6.500 0l-1.500 5.500c-2 1-4 1-6.500 0z" fill="#6fb52c" />
          <path d="M4.200 706.500c2-1 4-1 6 .5l-1.500 5.500c-2-1.500-4-1.500-6-.5z" fill="#3a7fd8" />
          <path d="M11.200 707.500c2 1 4 1 6.500 0l-1.500 5.500c-2 1-4 1-6.500 0z" fill="#f6bd2c" />
        </Ico>
        <Fit w={29} c="font-['Open_Sans',sans-serif] text-[12px] font-bold leading-[20px] text-black">Start</Fit>
      </div>
      <Ico x={54} y={695} w={179} h={25}>
        <circle cx="80" cy="708" r="5.500" fill="#dff0fb" stroke="#3ba0e0" strokeWidth="3" />
        <path d="M76 708.500h9" stroke="#3ba0e0" strokeWidth="2" />
        <path d="M72 713c1-5 9-12 15-12" stroke="#e7c64a" strokeWidth="1.600" />
        <path d="M106 702h5l1.500 2h7v10h-13.500z" fill="#f3d774" stroke="#d0ab42" strokeWidth=".8" />
        <path d="M107.500 706h11v4h-11z" fill="#fbf0b8" />
        <path d="M109 714v-4h8v4" stroke="#5aa7dc" strokeWidth="2.500" />
        <rect x="139.500" y="699.500" width="14" height="15" fill="#a9d4f3" stroke="#4f9ad2" />
        <circle cx="147" cy="707" r="6" fill="#f08a1d" />
        <path d="M145 703.500l5.500 3.500-5.500 3.500z" fill="#fff" />
        <circle cx="181" cy="707.500" r="7" fill="#e0432f" />
        <path d="M175 704l6 3.500 0 7a7 7 0 0 1-6-10.500z" fill="#2fa14e" />
        <path d="M181 704.500h6.500a7 7 0 0 1-6.500 10z" fill="#f7cb2d" />
        <circle cx="181" cy="707.500" r="3.300" fill="#4a86e8" stroke="#fff" />
        <circle cx="214" cy="707.500" r="7.500" fill="#b81818" />
        <ellipse cx="214" cy="707.500" rx="2.700" ry="5.500" fill="#f6eeee" />
      </Ico>
      <div className="flex h-[22px] w-8 items-center justify-center border border-b-white border-l-[#404040] border-r-white border-t-[#404040] bg-[#fbfbfa]">
        <WordLogo s={15} />
      </div>
      <div className="flex-1" />
      <div className="mr-[2px] flex h-[22px] w-[172px] items-center border border-b-white border-l-[#808080] border-r-white border-t-[#808080]">
        <Ico x={1107} y={698} w={102} h={20}>
          <path d="M1112.500 706l3-3 3 3M1112.500 710l3-3 3 3" stroke="#111" strokeWidth="1.500" />
          <rect x="1133.500" y="702.500" width="11" height="9" fill="#eef3f6" stroke="#555" />
          <path d="M1130.500 700v4h4v-4M1132.500 704v9" stroke="#444" strokeWidth="1.300" />
          <circle cx="1140.500" cy="709.500" r="4" fill="#3aa38c" stroke="#3f6f9a" />
          <path d="M1153.500 704.500h3l4-4v13l-4-4h-3z" fill="#fff" stroke="#777" />
          <path d="M1163 704c1.500 2 1.500 4 0 6M1165.500 702c2.500 3 2.500 7 0 10" stroke="#888" />
          <path d="M1178.500 700v14" stroke="#555" />
          <path d="M1179.500 701.500h6v2h6l-2 5h-5v-1.500h-5z" fill="#fff" stroke="#555" />
        </Ico>
        <Fit w={42} c="-mt-[2px] font-['Liberation_Sans',sans-serif] text-[11.500px] leading-[20px] text-black">2:18 AM</Fit>
        <Ico x={1251} y={698} w={26} h={20}>
          <rect x="1261.500" y="702.500" width="14" height="9" fill="#2c62c4" stroke="#1b3f86" />
          <path d="M1262 703h9l-4 8h-5z" fill="#5a92e6" />
          <path d="M1264 713.500h10" stroke="#5a6f96" />
        </Ico>
      </div>
    </div>
  );
}

export default function App() {
  return (
    <div className="relative flex h-[720px] w-[1280px] flex-col overflow-hidden bg-[#c3c7cf]">
      <TitleBar />
      <Tabs />
      <div className="flex h-[87px] shrink-0 border-b border-t border-b-[#858a93] border-t-[#b5b9c0] bg-linear-to-b from-white via-[#fdfdfe] via-60% to-[#e7eaee]">
        <Clipboard />
        <FontGroup />
        <ParagraphGroup />
        <StylesGroup />
        <EditingGroup />
      </div>
      <div className="flex min-h-0 flex-1 bg-linear-to-b from-[#cdd0d8] to-[#b5bac4]">
        <div className="flex flex-1 shadow-[inset_0_4px_3px_-1px_rgba(110,115,125,0.55)]">
          <div className="flex pt-[3px]"><Navigation /></div>
          <div className="flex flex-1 overflow-hidden pl-[123px]"><Page /></div>
          <ScrollBar />
        </div>
      </div>
      <StatusBar />
      <TaskBar />
      <div className="absolute left-[1064px] top-[167px] flex h-[42px] w-[170px] rounded-[2px] border border-[#767a84] bg-linear-to-b from-white to-[#e4e5f0] pl-[6px] pt-[2px]">
        <Fit w={37} c={`${ui} text-[#4c4f56]`}>Page: 1</Fit>
      </div>
      <Watermark />
    </div>
  );
}
